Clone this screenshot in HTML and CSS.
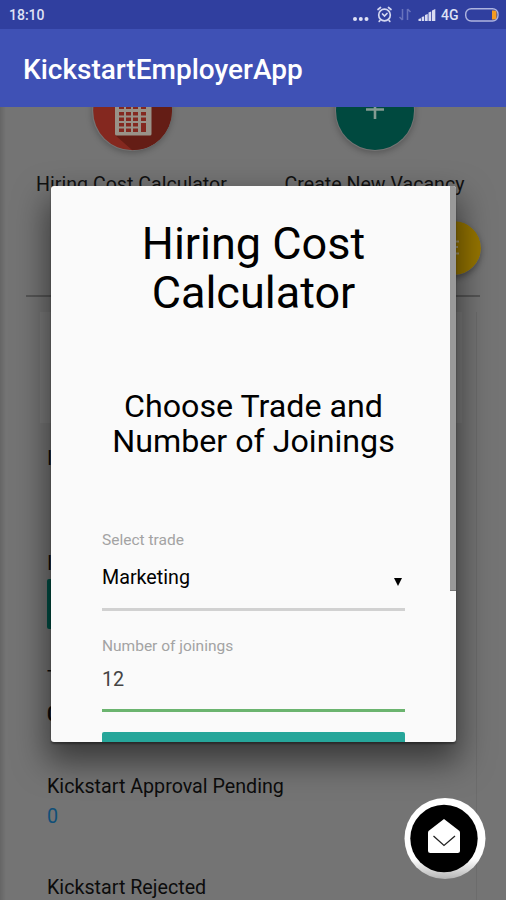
FILE: index.html
```html
<!DOCTYPE html>
<html lang="en">
<head>
<meta charset="utf-8">
<title>KickstartEmployerApp</title>
<link rel="stylesheet" href="styles.css">
</head>
<body>
<div class="status">
  <span class="clock">18:10</span>
  <svg class="status-icons" width="150" height="29" viewBox="0 0 150 29">
    <g fill="#dfe2f5"><circle cx="5" cy="19" r="2"/><circle cx="10.800" cy="19" r="2"/><circle cx="16.500" cy="19" r="2"/></g>
    <g fill="none" stroke="#d3d7f0" stroke-width="1.700" stroke-linecap="round"><circle cx="34.500" cy="15" r="5.800"/><path d="M28 9.500l2.500-2M41 9.500l-2.500-2M32.500 14l2 2 2.500-2.500M30 20.500l-.8.800M39 20.500l.8.800"/></g>
    <path d="M52.500 9v11M52.500 20l-3-3M57.500 20V9M57.500 9l3 3" fill="none" stroke="#6873bd" stroke-width="1.500"/>
    <path d="M68.500 21v-2l2.500-.8V21zM71.700 21v-4l2.500-.8V21zM75 21v-6l2.700-1V21zM78.500 21v-8.500l2.700-1V21zM82 21V10.500l3.300-1.500v12z" fill="#d9dcf2"/>
    <rect x="115.700" y="8.700" width="32.300" height="12.300" rx="5.500" fill="none" stroke="#aeb4df" stroke-width="1.400"/>
    <path d="M142 10.500h2.500q2 0 2 2v5q0 2-2 2H142z" fill="#f49b22"/>
    <text x="91" y="19.500">4G</text>
  </svg>
</div>
<header class="appbar"><h1>KickstartEmployerApp</h1></header>
<main class="page">
  <div class="tiles">
    <div class="tile">
      <svg class="disc" width="80" height="80" viewBox="0 0 80 80">
        <circle cx="40.500" cy="40" r="39.300" fill="#84281f"/>
        <path d="M23 64L59 26V10L79 30A39 39 0 0 1 40 79z" fill="#641d15"/>
        <rect x="23" y="11" width="36.500" height="53.500" rx="1.500" fill="#999288"/>
        <g fill="#84281f"><path d="M27 35h5v3h-5zM34 35h5v3h-5zM41 35h5v3h-5zM49 35h5v3h-5zM27 41h5v3.500h-5zM34 41h5v3.500h-5zM41 41h5v3.500h-5zM49 41h5v3.500h-5zM27 46.500h5v3.500h-5zM34 46.500h5v3.500h-5zM41 46.500h5v3.500h-5zM49 46.500h5v3.500h-5zM27 52h5v3.500h-5zM34 52h5v3.500h-5zM41 52h5v3.500h-5zM27 57.500h5v3.500h-5zM34 57.500h5v3.500h-5zM41 57.500h5v3.500h-5zM49 52h5v9h-5z"/></g>
      </svg>
      <span>Hiring Cost Calculator</span>
    </div>
    <div class="tile">
      <svg class="disc" width="80" height="80" viewBox="0 0 80 80">
        <circle cx="40" cy="40" r="39" fill="#00493f"/>
        <path d="M40 29v19M31 38.500h18" stroke="#849b92" stroke-width="2.600"/>
      </svg>
      <span>Create New Vacancy</span>
    </div>
  </div>
  <div class="action-row">
    <svg class="fab" width="54" height="54" viewBox="0 0 54 54">
      <circle cx="27" cy="27" r="27" fill="#967500"/>
      <path d="M28 20.500h4M28 26h3M28 32.500h4" stroke="#a69a71" stroke-width="2"/>
    </svg>
  </div>
  <hr class="rule">
  <section class="panel">
    <div class="banner"></div>
    <p class="line first">I</p>
    <p class="line second">I</p>
    <div class="teal-button"></div>
    <p class="line third">T</p>
    <p class="line strong">0</p>
    <p class="line pending">Kickstart Approval Pending</p>
    <p class="line count">0</p>
    <p class="line rejected">Kickstart Rejected</p>
  </section>
</main>
<div class="modal" role="dialog">
  <h2>Hiring Cost<br>Calculator</h2>
  <h3>Choose Trade and<br>Number of Joinings</h3>
  <div class="field select">
    <label>Select trade</label>
    <div class="value"><span>Marketing</span><svg width="8" height="8" viewBox="0 0 8 8"><path d="M0 0h8L4 8z"/></svg></div>
  </div>
  <div class="field number">
    <label>Number of joinings</label>
    <div class="value"><span>12</span></div>
  </div>
  <div class="submit"></div>
  <div class="scrollbar"></div>
</div>
<svg class="mail" width="84" height="84" viewBox="0 0 84 84">
  <defs><linearGradient id="ring" x2="0" y2="1"><stop offset=".75" stop-color="#fff"/><stop offset="1" stop-color="#b5b5b5"/></linearGradient></defs>
  <circle cx="42" cy="42.500" r="40.500" fill="url(#ring)"/>
  <circle cx="41" cy="42.500" r="33.700" fill="#000"/>
  <path d="M41 23L56.500 35Q57 36 57 37V54.500Q57 57 54.500 57H27.500Q25 57 25 54.500V37Q25 36 25.500 35z" fill="#fff"/>
  <path d="M30.500 40L41 49.500 52 40" fill="none" stroke="#222" stroke-width="1.300"/>
</svg>
</body>
</html>
```
FILE: styles.css
```css
* { box-sizing: border-box; }
body {
  margin: 0;
  width: 506px;
  height: 900px;
  position: relative;
  overflow: hidden;
  background: #747474;
  font-family: Roboto, "Liberation Sans", sans-serif;
  color: #000;
}
h1, h2, h3, p { margin: 0; font-weight: 400; }
.status {
  height: 29px;
  background: #303f9f;
  display: flex;
  justify-content: space-between;
  padding: 0 6px 0 9px;
}
.clock { color: #dfe2f5; font-size: 14px; line-height: 30px; font-weight: 500; }
.status-icons text { font-size: 14px; font-weight: 500; fill: #dfe2f5; }
.appbar { height: 78px; background: #3f51b5; padding-left: 23px; }
.appbar h1 { color: #fff; font-size: 28px; line-height: 82px; font-weight: 500; }
.page {
  height: 793px;
  overflow: hidden;
  background: linear-gradient(90deg, #656565, #747474 6px);
}
.tiles {
  display: grid;
  grid-template-columns: 1fr 1fr;
  padding: 0 10px;
  margin-top: -36px;
}
.tile { display: flex; flex-direction: column; align-items: center; }
.disc { border-radius: 50%; box-shadow: 0 2px 6px rgba(0,0,0,.25); }
.tile span { font-size: 19.6px; line-height: 24px; margin-top: 22px; white-space: nowrap; color: #111; }
.action-row { display: flex; justify-content: flex-end; padding: 24px 25px 0 0; }
.fab { border-radius: 50%; box-shadow: 0 3px 6px rgba(0,0,0,.35); }
.rule { height: 2px; border: 0; margin: 20px 26px 0; background: #555; }
.panel { margin: 15px 29px 0 40px; padding-left: 7px; border-right: 1px solid #6c6c6c; height: 620px; }
.banner { height: 111px; margin: 0 14px 0 -7px; background: #7a7a7a; }
.line { font-size: 19.7px; line-height: 24px; color: #0c0c0c; }
.first { margin-top: 24px; }
.second { margin-top: 81px; }
.teal-button { height: 50px; margin-top: 3px; width: 150px; border-radius: 2px; background: #004f45; }
.third { margin-top: 38px; }
.strong { margin-top: 12px; font-weight: 700; }
.pending { margin-top: 48px; }
.count { color: #104f78; margin-top: 6px; }
.rejected { margin-top: 47px; }
.modal {
  position: absolute;
  left: 51px;
  top: 186px;
  width: 405px;
  height: 556px;
  overflow: hidden;
  padding: 33px 51px 0;
  background: #fafafa;
  border-radius: 3px;
  box-shadow: 0 16px 32px 4px rgba(0,0,0,.5), 0 2px 2px rgba(0,0,0,.35);
}
.modal h2 { font-size: 45px; line-height: 49px; text-align: center; }
.modal h3 { font-size: 32.2px; line-height: 35px; text-align: center; margin-top: 72px; }
.field label { display: block; font-size: 15.5px; line-height: 20px; color: #a3a3a3; }
.field .value { display: flex; justify-content: space-between; align-items: center; font-size: 19.7px; line-height: 24px; }
.select { margin-top: 71px; height: 81px; border-bottom: 3px solid #d1d1d1; }
.select .value { margin-top: 16px; padding-right: 3px; }
.select svg { margin-top: 7px; }
.number { margin-top: 25px; height: 76px; border-bottom: 3px solid #6bb46f; }
.number .value { margin-top: 12px; color: #444; }
.submit { height: 50px; margin-top: 20px; background: #26a69a; border-radius: 2px; }
.scrollbar { position: absolute; top: 0; right: 0; width: 6px; height: 405px; background: #999; border-bottom: 1px solid #777; }
.mail { position: absolute; left: 403px; top: 796px; }
```
